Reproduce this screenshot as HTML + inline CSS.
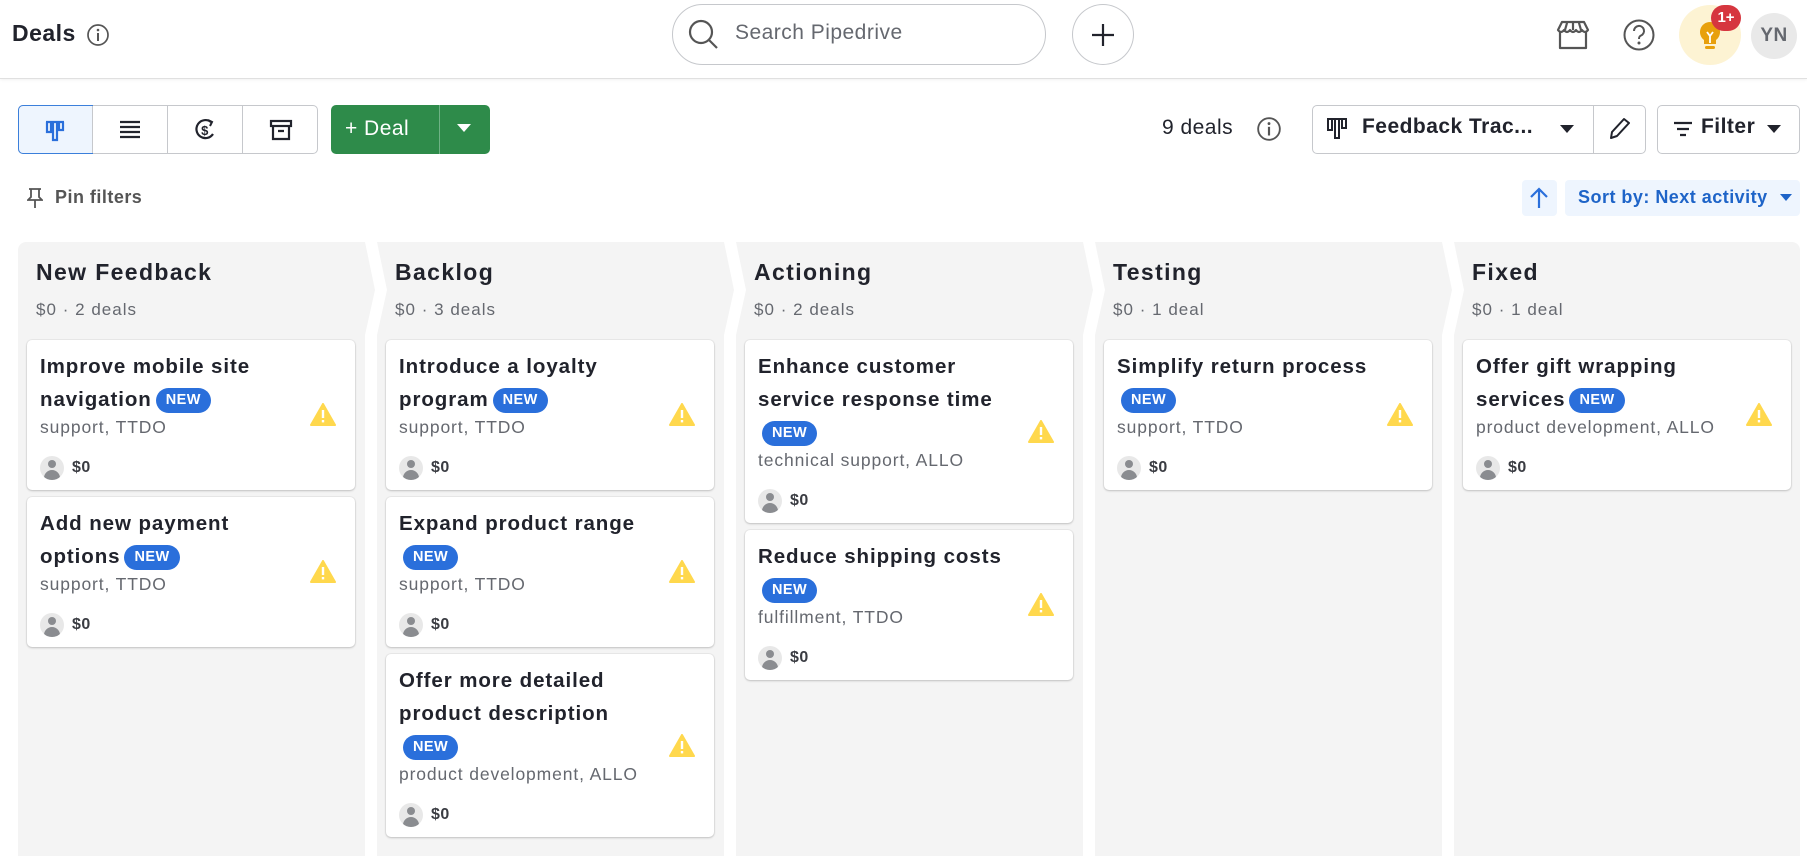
<!DOCTYPE html>
<html><head><meta charset="utf-8">
<style>
*{box-sizing:border-box;margin:0;padding:0}
body{width:1807px;height:856px;overflow:hidden;background:#fff;font-family:"Liberation Sans",Arial,sans-serif;color:#21232c;position:relative;letter-spacing:.03em}
.abs{position:absolute}
.hdr{position:absolute;left:0;top:0;width:1807px;height:79px;border-bottom:1px solid #e0e0e0;box-shadow:0 1px 3px rgba(0,0,0,.06)}
.btn{position:absolute;border:1px solid #c6c8cc;border-radius:5px;background:#fff}
.col{position:absolute;top:242px;height:614px;background:#f4f4f4}
.ct{position:absolute;left:18px;top:17px;font-size:23px;font-weight:bold;color:#21232c;letter-spacing:.06em}
.cs{position:absolute;left:18px;top:58px;font-size:17px;color:#65686f;letter-spacing:.06em}
.card{position:absolute;left:9px;width:328px;background:#fff;border-radius:5px;box-shadow:0 1px 2px rgba(0,0,0,.18),0 0 0 1px rgba(0,0,0,.04);padding:10px 60px 10px 13px}
.t{font-size:20.5px;font-weight:bold;line-height:33px;color:#21232c;letter-spacing:.045em}
.new{display:inline-block;background:#2a6fdb;color:#fff;font-size:14.5px;font-weight:bold;border-radius:13px;height:25px;line-height:25px;padding:0 10px;vertical-align:2px;margin-left:4px;letter-spacing:.03em}
.s{font-size:17.5px;line-height:22px;color:#65686f;letter-spacing:.05em}
.r{margin-top:18px;height:24px;display:flex;align-items:center;font-size:16px;font-weight:bold;color:#3a3c42}
.av{width:24px;height:24px;border-radius:50%;background:#e8e8e8;margin-right:8px;position:relative;overflow:hidden}
.av:before{content:"";position:absolute;left:8px;top:4px;width:8px;height:8px;border-radius:50%;background:#8a8c90}
.av:after{content:"";position:absolute;left:4px;top:14px;width:16px;height:14px;border-radius:8px 8px 0 0;background:#8a8c90}
.warn{position:absolute;right:19px;top:50%;margin-top:-12px;width:26px;height:23px}
</style></head><body>
<div class="hdr">
  <div class="abs" style="left:12px;top:20px;font-size:23px;font-weight:bold">Deals</div>
  <svg class="abs" style="left:86px;top:23px" width="24" height="24" viewBox="0 0 24 24"><circle cx="12" cy="12" r="10" fill="none" stroke="#555" stroke-width="1.7"/><rect x="11" y="10" width="2" height="8" fill="#555"/><circle cx="12" cy="7" r="1.3" fill="#555"/></svg>
  <div class="abs" style="left:672px;top:4px;width:374px;height:61px;border:1px solid #c6c8cc;border-radius:31px"></div>
  <svg class="abs" style="left:687px;top:18px" width="34" height="34" viewBox="0 0 34 34"><circle cx="14" cy="14" r="11" fill="none" stroke="#555" stroke-width="2.2"/><path d="M22 22l8 8" stroke="#555" stroke-width="2.2"/></svg>
  <div class="abs" style="left:735px;top:21px;font-size:21px;color:#65686f">Search Pipedrive</div>
  <div class="abs" style="left:1072px;top:4px;width:62px;height:61px;border:1px solid #c6c8cc;border-radius:50%"></div>
  <svg class="abs" style="left:1091px;top:23px" width="24" height="24" viewBox="0 0 24 24"><path d="M12 1v22M1 12h22" stroke="#21232c" stroke-width="2.2"/></svg>
  <svg class="abs" style="left:1555px;top:19px" width="36" height="32" viewBox="0 0 36 32"><path d="M5 12V29H31V12M3 11L7 3H29L33 11Q30 15 27 11Q24 15 21 11Q18 15 15 11Q12 15 9 11Q6 15 3 11ZM12 4l-2 7M18 4v7M24 4l2 7" fill="none" stroke="#555" stroke-width="2.2" stroke-linejoin="round"/></svg>
  <svg class="abs" style="left:1622px;top:18px" width="34" height="34" viewBox="0 0 34 34"><circle cx="17" cy="17" r="14.5" fill="none" stroke="#555" stroke-width="2"/><path d="M12 13a5 5 0 1 1 7 4.5c-1.5.8-2 1.5-2 3.5" fill="none" stroke="#555" stroke-width="2"/><circle cx="17" cy="25" r="1.5" fill="#555"/></svg>
  <div class="abs" style="left:1679px;top:5px;width:62px;height:60px;border-radius:50%;background:#fdf3d3"></div>
  <svg class="abs" style="left:1698px;top:20px" width="24" height="34" viewBox="0 0 24 34"><path d="M12 2a10 10 0 0 0-6 18v4h12v-4A10 10 0 0 0 12 2z" fill="#e8a00c"/><rect x="7" y="26" width="10" height="3" rx="1.5" fill="#e8a00c"/><path d="M9 12l3 4 3-4M12 16v7" fill="none" stroke="#fff" stroke-width="1.8"/></svg>
  <div class="abs" style="left:1711px;top:5px;width:30px;height:26px;border-radius:13px;background:#d6363f;color:#fff;font-weight:bold;font-size:15px;line-height:26px;text-align:center;letter-spacing:0">1+</div>
  <div class="abs" style="left:1751px;top:13px;width:46px;height:46px;border-radius:50%;background:#e9e9e9;color:#65686f;font-weight:bold;font-size:19px;line-height:46px;text-align:center">YN</div>
</div>

<div class="btn" style="left:18px;top:105px;width:300px;height:49px"></div>
<div class="abs" style="left:18px;top:105px;width:75px;height:49px;border:1px solid #3b7fdb;border-radius:5px 0 0 5px;background:#eef5fe"></div>
<div class="abs" style="left:92px;top:106px;width:1px;height:47px;background:#c6c8cc"></div>
<div class="abs" style="left:167px;top:106px;width:1px;height:47px;background:#c6c8cc"></div>
<div class="abs" style="left:242px;top:106px;width:1px;height:47px;background:#c6c8cc"></div>
<svg class="abs" style="left:43px;top:119px" width="24" height="24" viewBox="0 0 24 24"><path d="M3 3h18M4 3v10h4V3M10 3v18h4V3M16 3v8h4V3" fill="none" stroke="#2a6fdb" stroke-width="2.2"/></svg>
<svg class="abs" style="left:119px;top:119px" width="22" height="22" viewBox="0 0 22 22"><path d="M1 3h20M1 8h20M1 13h20M1 18h20" stroke="#21232c" stroke-width="2.2"/></svg>
<svg class="abs" style="left:193px;top:117px" width="24" height="26" viewBox="0 0 24 26"><path d="M18 5A9 9 0 1 0 20 17" fill="none" stroke="#21232c" stroke-width="2.2"/><path d="M15 3l4 2-2 4" fill="none" stroke="#21232c" stroke-width="2"/><text x="12" y="18" font-size="13" font-weight="bold" text-anchor="middle" fill="#21232c" font-family="Liberation Sans">$</text></svg>
<svg class="abs" style="left:269px;top:119px" width="24" height="22" viewBox="0 0 24 22"><rect x="2" y="2" width="20" height="5" fill="none" stroke="#21232c" stroke-width="2.2"/><path d="M4 7v13h16V7M9 12h6" fill="none" stroke="#21232c" stroke-width="2.2"/></svg>
<div class="abs" style="left:331px;top:105px;width:159px;height:49px;background:#2e8b4a;border-radius:5px"></div>
<div class="abs" style="left:439px;top:105px;width:1px;height:49px;background:#6fb285"></div>
<div class="abs" style="left:345px;top:114px;color:#fff;font-size:21px;line-height:30px">+ Deal</div>
<svg class="abs" style="left:457px;top:124px" width="14" height="9" viewBox="0 0 14 9"><path d="M0 0h14L7 8z" fill="#fff"/></svg>

<div class="abs" style="left:1162px;top:116px;font-size:21px">9 deals</div>
<svg class="abs" style="left:1256px;top:116px" width="26" height="26" viewBox="0 0 24 24"><circle cx="12" cy="12" r="10" fill="none" stroke="#555" stroke-width="1.7"/><rect x="11" y="10" width="2" height="8" fill="#555"/><circle cx="12" cy="7" r="1.3" fill="#555"/></svg>
<div class="btn" style="left:1312px;top:105px;width:334px;height:49px"></div>
<div class="abs" style="left:1593px;top:106px;width:1px;height:47px;background:#c6c8cc"></div>
<svg class="abs" style="left:1325px;top:117px" width="24" height="24" viewBox="0 0 24 24"><path d="M2 2h20M3 2v11h4V2M10 2v19h4V2M17 2v9h4V2" fill="none" stroke="#21232c" stroke-width="2"/></svg>
<div class="abs" style="left:1362px;top:115px;font-size:21px;font-weight:bold">Feedback Trac...</div>
<svg class="abs" style="left:1560px;top:125px" width="14" height="9" viewBox="0 0 14 9"><path d="M0 0h14L7 8z" fill="#21232c"/></svg>
<svg class="abs" style="left:1607px;top:116px" width="24" height="26" viewBox="0 0 24 26"><path d="M4 22l1-6L17 3l5 4L10 20z" fill="none" stroke="#21232c" stroke-width="2" stroke-linejoin="round"/></svg>
<div class="btn" style="left:1657px;top:105px;width:143px;height:49px"></div>
<svg class="abs" style="left:1673px;top:121px" width="20" height="16" viewBox="0 0 20 16"><path d="M1 2h18M4 8h12M7 14h6" stroke="#21232c" stroke-width="2.2"/></svg>
<div class="abs" style="left:1701px;top:115px;font-size:21px;font-weight:bold">Filter</div>
<svg class="abs" style="left:1767px;top:125px" width="14" height="9" viewBox="0 0 14 9"><path d="M0 0h14L7 8z" fill="#21232c"/></svg>

<svg class="abs" style="left:27px;top:187px" width="16" height="22" viewBox="0 0 16 22"><path d="M2 2h12M4 2v8l-3 3h14l-3-3V2M8 13v8" fill="none" stroke="#555" stroke-width="1.8"/></svg>
<div class="abs" style="left:55px;top:187px;font-size:18px;font-weight:bold;color:#555">Pin filters</div>
<div class="abs" style="left:1522px;top:180px;width:35px;height:36px;background:#eef5fe;border-radius:4px"></div>
<svg class="abs" style="left:1529px;top:187px" width="20" height="22" viewBox="0 0 20 22"><path d="M10 21V3M2 10l8-8 8 8" fill="none" stroke="#2a6fdb" stroke-width="2.2"/></svg>
<div class="abs" style="left:1565px;top:180px;width:235px;height:36px;background:#eef5fe;border-radius:4px"></div>
<div class="abs" style="left:1578px;top:187px;font-size:18px;font-weight:bold;color:#1e64c8">Sort by: Next activity</div>
<svg class="abs" style="left:1780px;top:194px" width="12" height="8" viewBox="0 0 12 8"><path d="M0 0h12L6 7z" fill="#1e64c8"/></svg>

<div class="col" style="left:18px;width:358px;border-radius:8px 0 0 0;clip-path:polygon(0 0,347px 0,357px 48px,347px 93px,347px 100%,0 100%)">
 <div class="ct">New Feedback</div><div class="cs">$0 · 2 deals</div>
 <div class="card" style="top:98px"><div class="t">Improve mobile site navigation<span class="new">NEW</span></div><div class="s">support, TTDO</div><div class="r"><div class="av"></div>$0</div><svg class="warn" viewBox="0 0 26 23"><path d="M13 1L25 22H1z" fill="#ffd84d" stroke="#ffd84d" stroke-linejoin="round" stroke-width="2"/><rect x="11.8" y="7" width="2.4" height="8" fill="#fff"/><rect x="11.8" y="17" width="2.4" height="2.4" fill="#fff"/></svg></div>
 <div class="card" style="top:255px"><div class="t">Add new payment options<span class="new">NEW</span></div><div class="s">support, TTDO</div><div class="r"><div class="av"></div>$0</div><svg class="warn" viewBox="0 0 26 23"><path d="M13 1L25 22H1z" fill="#ffd84d" stroke="#ffd84d" stroke-linejoin="round" stroke-width="2"/><rect x="11.8" y="7" width="2.4" height="8" fill="#fff"/><rect x="11.8" y="17" width="2.4" height="2.4" fill="#fff"/></svg></div>
</div>
<div class="col" style="left:377px;width:358px;clip-path:polygon(0 0,347px 0,357px 48px,347px 93px,347px 100%,0 100%,0 93px,10px 48px)">
 <div class="ct">Backlog</div><div class="cs">$0 · 3 deals</div>
 <div class="card" style="top:98px"><div class="t">Introduce a loyalty program<span class="new">NEW</span></div><div class="s">support, TTDO</div><div class="r"><div class="av"></div>$0</div><svg class="warn" viewBox="0 0 26 23"><path d="M13 1L25 22H1z" fill="#ffd84d" stroke="#ffd84d" stroke-linejoin="round" stroke-width="2"/><rect x="11.8" y="7" width="2.4" height="8" fill="#fff"/><rect x="11.8" y="17" width="2.4" height="2.4" fill="#fff"/></svg></div>
 <div class="card" style="top:255px"><div class="t">Expand product range<br><span class="new">NEW</span></div><div class="s">support, TTDO</div><div class="r"><div class="av"></div>$0</div><svg class="warn" viewBox="0 0 26 23"><path d="M13 1L25 22H1z" fill="#ffd84d" stroke="#ffd84d" stroke-linejoin="round" stroke-width="2"/><rect x="11.8" y="7" width="2.4" height="8" fill="#fff"/><rect x="11.8" y="17" width="2.4" height="2.4" fill="#fff"/></svg></div>
 <div class="card" style="top:412px"><div class="t">Offer more detailed<br>product description<br><span class="new">NEW</span></div><div class="s">product development, ALLO</div><div class="r"><div class="av"></div>$0</div><svg class="warn" viewBox="0 0 26 23"><path d="M13 1L25 22H1z" fill="#ffd84d" stroke="#ffd84d" stroke-linejoin="round" stroke-width="2"/><rect x="11.8" y="7" width="2.4" height="8" fill="#fff"/><rect x="11.8" y="17" width="2.4" height="2.4" fill="#fff"/></svg></div>
</div>
<div class="col" style="left:736px;width:358px;clip-path:polygon(0 0,347px 0,357px 48px,347px 93px,347px 100%,0 100%,0 93px,10px 48px)">
 <div class="ct">Actioning</div><div class="cs">$0 · 2 deals</div>
 <div class="card" style="top:98px"><div class="t">Enhance customer<br>service response time<br><span class="new">NEW</span></div><div class="s">technical support, ALLO</div><div class="r"><div class="av"></div>$0</div><svg class="warn" viewBox="0 0 26 23"><path d="M13 1L25 22H1z" fill="#ffd84d" stroke="#ffd84d" stroke-linejoin="round" stroke-width="2"/><rect x="11.8" y="7" width="2.4" height="8" fill="#fff"/><rect x="11.8" y="17" width="2.4" height="2.4" fill="#fff"/></svg></div>
 <div class="card" style="top:288px"><div class="t">Reduce shipping costs<br><span class="new">NEW</span></div><div class="s">fulfillment, TTDO</div><div class="r"><div class="av"></div>$0</div><svg class="warn" viewBox="0 0 26 23"><path d="M13 1L25 22H1z" fill="#ffd84d" stroke="#ffd84d" stroke-linejoin="round" stroke-width="2"/><rect x="11.8" y="7" width="2.4" height="8" fill="#fff"/><rect x="11.8" y="17" width="2.4" height="2.4" fill="#fff"/></svg></div>
</div>
<div class="col" style="left:1095px;width:358px;clip-path:polygon(0 0,347px 0,357px 48px,347px 93px,347px 100%,0 100%,0 93px,10px 48px)">
 <div class="ct">Testing</div><div class="cs">$0 · 1 deal</div>
 <div class="card" style="top:98px"><div class="t">Simplify return process<br><span class="new">NEW</span></div><div class="s">support, TTDO</div><div class="r"><div class="av"></div>$0</div><svg class="warn" viewBox="0 0 26 23"><path d="M13 1L25 22H1z" fill="#ffd84d" stroke="#ffd84d" stroke-linejoin="round" stroke-width="2"/><rect x="11.8" y="7" width="2.4" height="8" fill="#fff"/><rect x="11.8" y="17" width="2.4" height="2.4" fill="#fff"/></svg></div>
</div>
<div class="col" style="left:1454px;width:346px;border-radius:0 8px 0 0;clip-path:polygon(0 0,100% 0,100% 100%,0 100%,0 93px,10px 48px)">
 <div class="ct">Fixed</div><div class="cs">$0 · 1 deal</div>
 <div class="card" style="top:98px"><div class="t">Offer gift wrapping<br>services<span class="new">NEW</span></div><div class="s">product development, ALLO</div><div class="r"><div class="av"></div>$0</div><svg class="warn" viewBox="0 0 26 23"><path d="M13 1L25 22H1z" fill="#ffd84d" stroke="#ffd84d" stroke-linejoin="round" stroke-width="2"/><rect x="11.8" y="7" width="2.4" height="8" fill="#fff"/><rect x="11.8" y="17" width="2.4" height="2.4" fill="#fff"/></svg></div>
</div>
</body></html>
